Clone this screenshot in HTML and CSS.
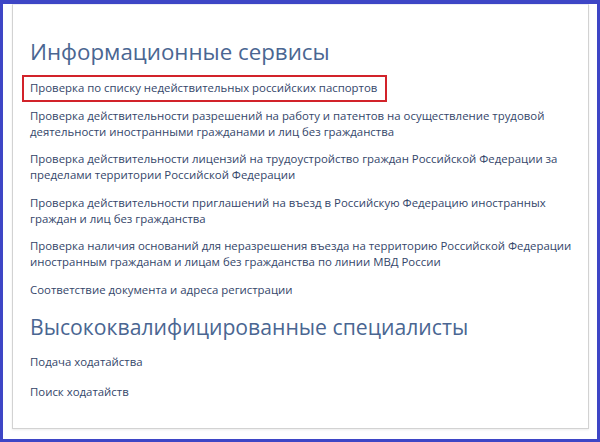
FILE: index.html
```html
<!DOCTYPE html>
<html lang="ru">
<head>
<meta charset="utf-8">
<title>Информационные сервисы</title>
<link rel="stylesheet" href="styles.css">
</head>
<body>
<div class="frame">
  <div class="card">
    <h2 class="section-title">Информационные сервисы</h2>
    <ul class="links">
      <li class="link-item highlighted"><a href="#">Проверка по списку недействительных российских паспортов</a></li>
      <li class="link-item"><a href="#">Проверка действительности разрешений на работу и патентов на осуществление трудовой деятельности иностранными гражданами и лиц без гражданства</a></li>
      <li class="link-item"><a href="#">Проверка действительности лицензий на трудоустройство граждан Российской Федерации за пределами территории Российской Федерации</a></li>
      <li class="link-item"><a href="#">Проверка действительности приглашений на въезд в Российскую Федерацию иностранных граждан и лиц без гражданства</a></li>
      <li class="link-item"><a href="#">Проверка наличия оснований для неразрешения въезда на территорию Российской Федерации иностранным гражданам и лицам без гражданства по линии МВД России</a></li>
      <li class="link-item"><a href="#">Соответствие документа и адреса регистрации</a></li>
    </ul>
    <h2 class="section-title second">Высококвалифицированные специалисты</h2>
    <ul class="links compact">
      <li class="link-item"><a href="#">Подача ходатайства</a></li>
      <li class="link-item"><a href="#">Поиск ходатайств</a></li>
    </ul>
  </div>
</div>
</body>
</html>
```

FILE: styles.css
```css
html, body {
  margin: 0;
  padding: 0;
  background: #ffffff;
}

.frame {
  box-sizing: border-box;
  width: 600px;
  height: 442px;
  border: 3px solid #3e46c6;
  border-top-width: 4px;
  padding: 0 8px 10px 9px;
  display: flex;
  flex-direction: column;
  background: #ffffff;
}

.card {
  flex: 1;
  border: 1px solid #d2d2d2;
  border-top: 1px solid #ececf4;
  box-shadow: 0 1px 2px rgba(0, 0, 0, 0.08);
  padding: 31px 8px 0 17px;
  font-family: "Open Sans", "Noto Sans", sans-serif;
}

.section-title {
  margin: 0 0 12px 0;
  font-size: 22.3px;
  line-height: 32px;
  font-weight: 400;
  color: #4a6692;
}

.section-title.second {
  margin-top: 13px;
  margin-bottom: 11px;
  font-size: 21.2px;
}

.links {
  list-style: none;
  margin: 0;
  padding: 0;
}

.link-item {
  margin: 0 0 11.5px 0;
  font-size: 11.4px;
  line-height: 16px;
}

.compact .link-item {
  margin-bottom: 14px;
}

.links:last-child .link-item:last-child {
  margin-bottom: 0;
}

.link-item a {
  color: #34466a;
  text-decoration: none;
}

.highlighted {
  position: relative;
  width: fit-content;
}

.highlighted::after {
  content: "";
  position: absolute;
  left: -8px;
  right: -10px;
  top: -5px;
  bottom: -6px;
  border: 2px solid #d2232a;
  pointer-events: none;
}
```
